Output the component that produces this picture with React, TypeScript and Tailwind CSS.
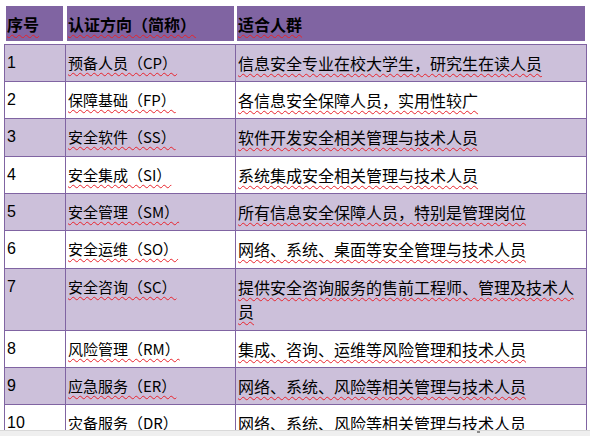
import React from "react";

type Row = { n: string; a: string; b: string; shade: boolean; h: string };

const rows: Row[] = [
  { n: "1", a: "预备人员（CP）", b: "信息安全专业在校大学生，研究生在读人员", shade: true, h: "h-[37px]" },
  { n: "2", a: "保障基础（FP）", b: "各信息安全保障人员，实用性较广", shade: false, h: "h-[37px]" },
  { n: "3", a: "安全软件（SS）", b: "软件开发安全相关管理与技术人员", shade: true, h: "h-[38px]" },
  { n: "4", a: "安全集成（SI）", b: "系统集成安全相关管理与技术人员", shade: false, h: "h-[37px]" },
  { n: "5", a: "安全管理（SM）", b: "所有信息安全保障人员，特别是管理岗位", shade: true, h: "h-[37px]" },
  { n: "6", a: "安全运维（SO）", b: "网络、系统、桌面等安全管理与技术人员", shade: false, h: "h-[38px]" },
  { n: "7", a: "安全咨询（SC）", b: "提供安全咨询服务的售前工程师、管理及技术人员", shade: true, h: "h-[62px]" },
  { n: "8", a: "风险管理（RM）", b: "集成、咨询、运维等风险管理和技术人员", shade: false, h: "h-[37px]" },
  { n: "9", a: "应急服务（ER）", b: "网络、系统、风险等相关管理与技术人员", shade: true, h: "h-[37px]" },
  { n: "10", a: "灾备服务（DR）", b: "网络、系统、风险等相关管理与技术人员", shade: false, h: "h-[37px]" },
];

const squiggle =
  "underline decoration-wavy decoration-[#e8232b] decoration-1 underline-offset-[3px]";

export default function App() {
  return (
    <div className="relative w-[590px] h-[436px] overflow-hidden bg-white text-black font-['Noto_Sans_CJK_SC',sans-serif]">
      <div className="pl-[4px] pt-[4px]">
        {/* header */}
        <div className="flex pb-[3px]">
          <div className="ml-[2px] mt-[2px] w-[57px] h-[35px] bg-[#8064A2] flex items-center pl-[1px] text-[16px] font-bold leading-[24px]">
            <span className={squiggle}>序号</span>
          </div>
          <div className="ml-[4px] mt-[2px] w-[167px] h-[35px] bg-[#8064A2] flex items-center pl-[1px] text-[16px] font-bold leading-[24px]">
            <span className={squiggle}>认证方向（简称）</span>
          </div>
          <div className="ml-[3px] mt-[2px] w-[348px] h-[35px] bg-[#8064A2] flex items-center pl-[1px] text-[16px] font-bold leading-[24px]">
            <span className={squiggle}>适合人群</span>
          </div>
        </div>
        {/* body */}
        <div className="w-[583px] border-l border-r border-[#8064A2]">
          {rows.map((r) => (
            <div
              key={r.n}
              className={`grid grid-cols-[61px_170px_350px] border-t border-[#8064A2] ${r.h} ${
                r.shade ? "bg-[#CCC0DA]" : "bg-white"
              }`}
            >
              <div className="border-r border-[#8064A2] pl-[2px] pt-[6px] leading-[24px] text-[16px] font-['Liberation_Sans',sans-serif]">
                {r.n}
              </div>
              <div className="border-r border-[#8064A2] pl-[2px] pt-[6px] leading-[24px] text-[15px]">
                <span className={squiggle}>{r.a}</span>
              </div>
              <div className="pl-[2px] pr-[4px] pt-[6px] leading-[24px] text-[16px]">
                <span className={squiggle}>{r.b}</span>
              </div>
            </div>
          ))}
        </div>
      </div>
      {/* window bottom edge */}
      <div className="absolute left-0 right-0 bottom-0 h-[6px] bg-[#efefef] border-t border-[#d9d9d9]">
        <div className="absolute left-[477px] top-[0px] w-[3px] h-[2px] bg-[#8a8a8a]" />
      </div>
    </div>
  );
}
